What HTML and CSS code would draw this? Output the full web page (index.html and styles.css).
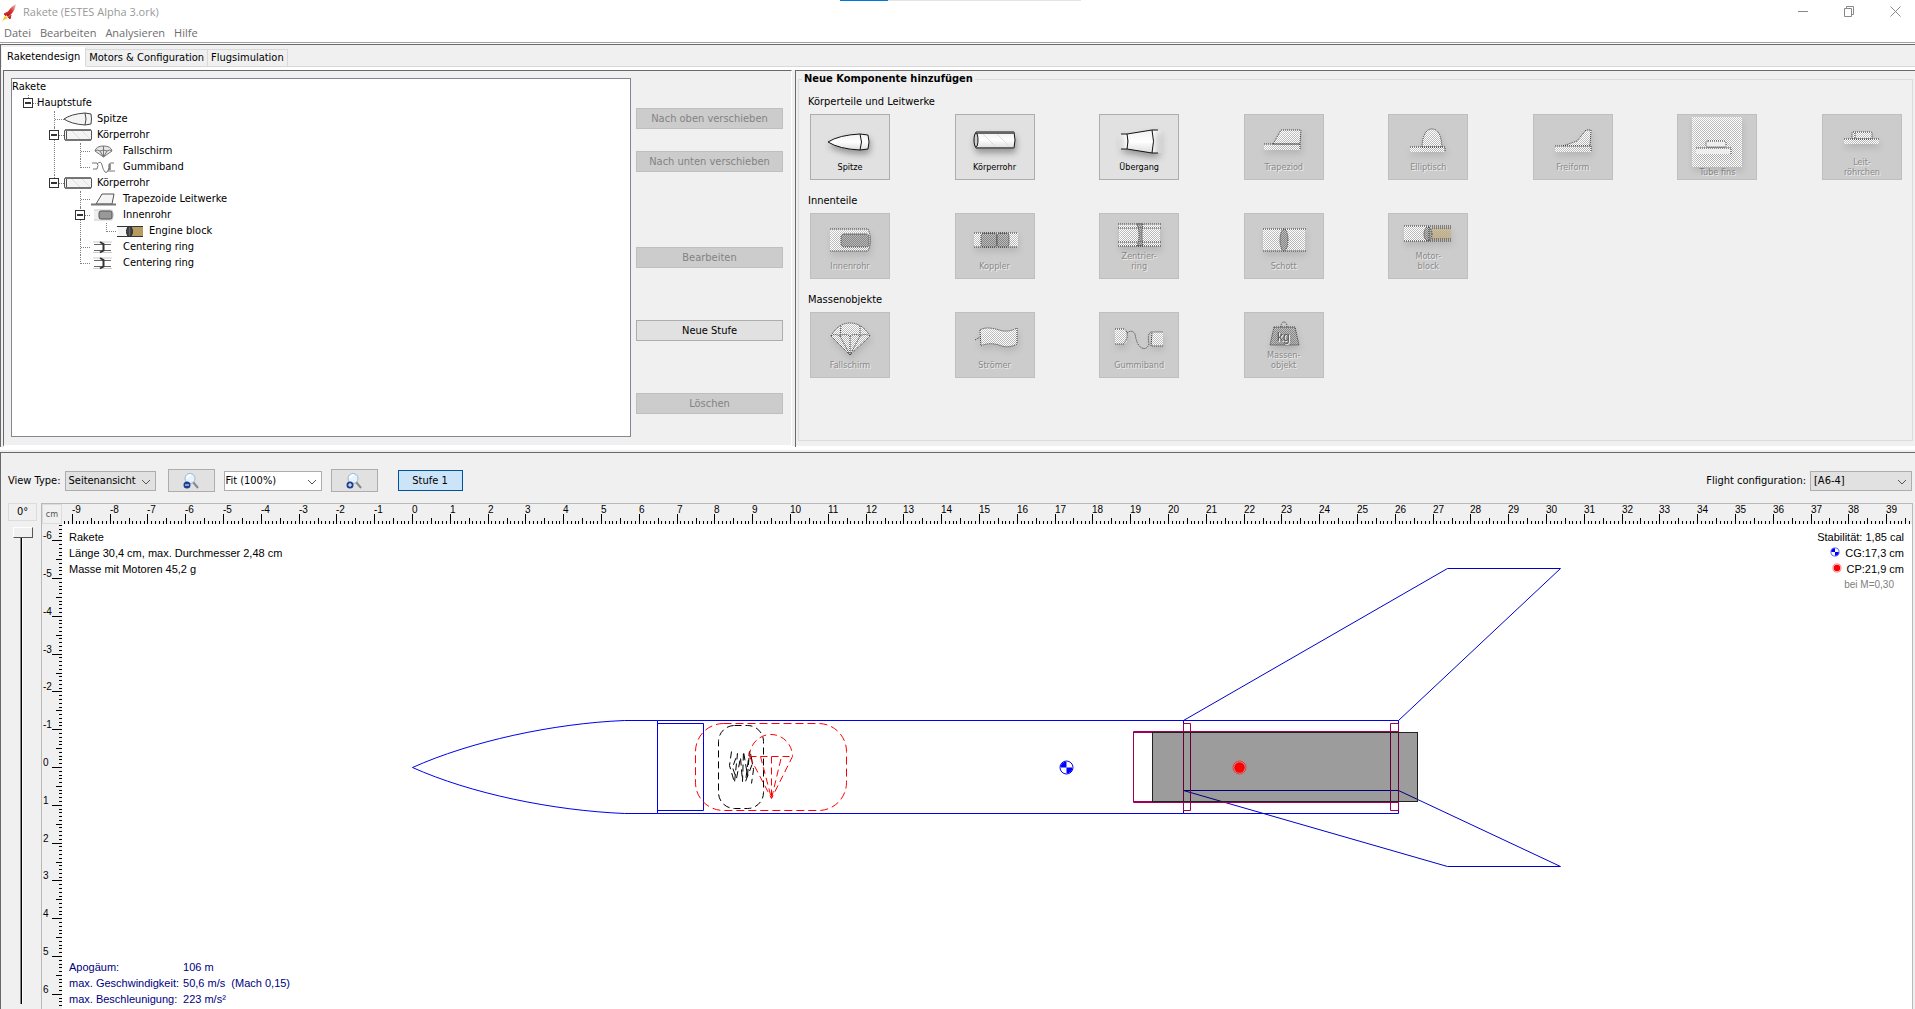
FILE: index.html
```html
<!DOCTYPE html>
<html lang="de">
<head>
<meta charset="utf-8">
<title>Rakete (ESTES Alpha 3.ork)</title>
<link rel="stylesheet" href="styles.css">
</head>
<body>
<svg class="defs" aria-hidden="true">
  <defs>
    <pattern id="dither" width="2" height="2" patternUnits="userSpaceOnUse"><rect width="1" height="1" fill="#fff"/><rect x="1" y="1" width="1" height="1" fill="#fff"/></pattern>
    <pattern id="dither-dark" width="2" height="2" patternUnits="userSpaceOnUse"><rect width="1" height="1" fill="#888"/><rect x="1" y="1" width="1" height="1" fill="#888"/></pattern>
    <pattern id="dither-tan" width="2" height="2" patternUnits="userSpaceOnUse"><rect width="1" height="1" fill="#c9ad70"/><rect x="1" y="1" width="1" height="1" fill="#c9ad70"/></pattern>
    <linearGradient id="metal" x2="0" y2="1"><stop offset="0" stop-color="#f0f0f0"/><stop offset=".5" stop-color="#fff"/><stop offset="1" stop-color="#ddd"/></linearGradient>
    <linearGradient id="fade-in"><stop offset="0" stop-color="#fff" stop-opacity="0"/><stop offset="1" stop-color="#fff"/></linearGradient>
    <linearGradient id="fade-out"><stop offset="0" stop-color="#fff"/><stop offset="1" stop-color="#fff" stop-opacity="0"/></linearGradient>
    <linearGradient id="flame" x1="1" x2="0" y2="1"><stop offset="0" stop-color="#e9dede"/><stop offset=".5" stop-color="#d9302c"/><stop offset="1" stop-color="#a81616"/></linearGradient>
    <symbol id="i-nose" viewBox="0 0 29 14"><path d="M1 7Q8 2 22 1L28 2Q29 7 28 12L22 13Q8 12 1 7Z" fill="#f4f4f4" stroke="#444"/><path d="M22 1Q24 7 22 13" fill="none" stroke="#444"/></symbol>
    <symbol id="i-tube" viewBox="0 0 29 14"><rect x="1.500" y="2" width="27" height="10" rx="1" fill="#f4f4f4" stroke="#555"/><path d="M9 3L17 11M19 3L27 11" fill="none" stroke="#ddd"/><path d="M2 2H28M2 12H28" stroke="#444"/><path d="M3.500 3V11" stroke="#555"/></symbol>
    <symbol id="i-chute" viewBox="0 0 29 14"><path d="M6 7Q7 2 14.500 2T23 7L14.500 13Z" fill="#e6e6e6" stroke="#777"/><path d="M6 7Q8 5 11 7Q14.500 5 18 7Q21 5 23 7M11 7L14.500 13L18 7M14.500 2V13" fill="none" stroke="#777"/></symbol>
    <symbol id="i-cord" viewBox="0 0 29 14"><path d="M3 3H8Q10 5 8 9H4M8 4Q12 0 13 5T16 12T20 8Q19 3 22 3H25M20 8L19 11H26" fill="none" stroke="#777"/><path d="M21 4V10" stroke="#333"/></symbol>
    <symbol id="i-fins" viewBox="0 0 29 14"><path d="M7 12L13 2H25L23 12Z" fill="#f4f4f4" stroke="#555"/><path d="M2 12.500H27" stroke="#777" stroke-width="2"/></symbol>
    <symbol id="i-inner" viewBox="0 0 29 14"><path d="M5 2H23Q26 7 23 12H5" fill="#eee" stroke="#ccc"/><rect x="10" y="3" width="13" height="8" rx="2" fill="#999" stroke="#555"/></symbol>
    <symbol id="i-block" viewBox="0 0 29 14"><path d="M2 2.500H28M2 12.500H28" stroke="#333"/><rect x="3" y="3" width="10" height="9" fill="#f4f4f4"/><rect x="17" y="3" width="11" height="9" fill="#b79a60"/><ellipse cx="14.500" cy="7.500" rx="3" ry="5" fill="#666" stroke="#222"/><path d="M13 3V12M16 3V12" stroke="#222"/></symbol>
    <symbol id="i-ring" viewBox="0 0 29 14"><path d="M4 2H23M4 12.500H23" stroke="#ccc"/><path d="M5 4.500H22M5 10.500H22" stroke="#666"/><path d="M11 2L14.500 4V10.500L11 12.500" fill="none" stroke="#333" stroke-width="2"/></symbol>
    <symbol id="i-lens" viewBox="0 0 16 16"><path d="M10 9L15 15" stroke="#888" stroke-width="2"/><circle cx="7" cy="5.500" r="5" fill="#e5f3ff" stroke="#9fb6cf"/><path d="M4 5Q5 2 8 2" fill="none" stroke="#fff" stroke-width="2"/></symbol>
    <symbol id="i-down" viewBox="0 0 10 6"><path d="M1 1L5 5L9 1" fill="none" stroke="#555"/></symbol>
    <symbol id="cg" viewBox="-8 -8 16 16"><circle r="6.500" fill="#fff" stroke="#00f" stroke-width="1"/><path d="M0 0H-6A6 6 0 0 1 0-6ZM0 0H6A6 6 0 0 1 0 6Z" fill="#00f"/></symbol>
    <symbol id="cp" viewBox="-8 -8 16 16"><circle r="6.500" fill="none" stroke="#f33"/><circle r="5.200" fill="#f00"/></symbol>
  </defs>
</svg>

<header class="titlebar">
  <svg class="app-icon" width="16" height="18" viewBox="0 0 16 18"><path d="M14 1Q8 4 4 12L6 14Q13 9 14 1Z" fill="url(#flame)"/><path d="M6 9L2 11L4 13M9 12L8 16L6 14" fill="#c22" stroke="#c22"/><path d="M3 13L0 18L6 15Z" fill="#f8c81c"/></svg>
  <h1>Rakete (ESTES Alpha 3.ork)</h1>
  <div class="progress"></div>
  <div class="window-buttons">
    <button aria-label="Minimieren"><svg width="11" height="11"><path d="M0 5.500H10" stroke="#888"/></svg></button>
    <button aria-label="Wiederherstellen"><svg width="11" height="11"><path d="M.5 2.500H7.500V10.500H.5ZM2.500 2.500V.5H9.500V8.500H7.500" fill="none" stroke="#888"/></svg></button>
    <button aria-label="Schließen"><svg width="11" height="11"><path d="M.5 .5L10.500 10.500M10.500 .5L.5 10.500" stroke="#888"/></svg></button>
  </div>
</header>
<nav class="menubar"><a href="#datei">Datei</a><a href="#bearbeiten">Bearbeiten</a><a href="#analysieren">Analysieren</a><a href="#hilfe">Hilfe</a></nav>

<main class="frame">
  <div class="tabs" role="tablist">
    <button role="tab" aria-selected="true" class="tab active">Raketendesign</button>
    <button role="tab" aria-selected="false" class="tab">Motors &amp; Configuration</button>
    <button role="tab" aria-selected="false" class="tab">Flugsimulation</button>
  </div>

  <div class="design">
    <section class="structure">
      <div class="tree">
        <div class="root">Rakete</div>
        <ul>
          <li><div class="node"><button class="toggle" aria-label="Hauptstufe einklappen"></button>Hauptstufe</div>
            <ul>
              <li><div class="node leaf"><svg class="part"><use href="#i-nose"/></svg>Spitze</div></li>
              <li><div class="node"><button class="toggle" aria-label="Körperrohr einklappen"></button><svg class="part"><use href="#i-tube"/></svg>Körperrohr</div>
                <ul>
                  <li><div class="node leaf"><svg class="part"><use href="#i-chute"/></svg>Fallschirm</div></li>
                  <li><div class="node leaf"><svg class="part"><use href="#i-cord"/></svg>Gummiband</div></li>
                </ul></li>
              <li><div class="node"><button class="toggle" aria-label="Körperrohr einklappen"></button><svg class="part"><use href="#i-tube"/></svg>Körperrohr</div>
                <ul>
                  <li><div class="node leaf"><svg class="part"><use href="#i-fins"/></svg>Trapezoide Leitwerke</div></li>
                  <li><div class="node"><button class="toggle" aria-label="Innenrohr einklappen"></button><svg class="part"><use href="#i-inner"/></svg>Innenrohr</div>
                    <ul><li><div class="node leaf"><svg class="part"><use href="#i-block"/></svg>Engine block</div></li></ul></li>
                  <li><div class="node leaf"><svg class="part"><use href="#i-ring"/></svg>Centering ring</div></li>
                  <li><div class="node leaf"><svg class="part"><use href="#i-ring"/></svg>Centering ring</div></li>
                </ul></li>
            </ul></li>
        </ul>
      </div>
      <div class="actions">
        <button class="btn" disabled>Nach oben verschieben</button>
        <button class="btn" disabled>Nach unten verschieben</button>
        <button class="btn edit" disabled>Bearbeiten</button>
        <button class="btn spaced">Neue Stufe</button>
        <button class="btn spaced" disabled>Löschen</button>
      </div>
    </section>

    <section class="components">
      <fieldset>
        <legend>Neue Komponente hinzufügen</legend>
        <h2>Körperteile und Leitwerke</h2>
        <div class="palette">
          <button class="comp"><svg><path d="M17 27Q28 20 49 19L57 20Q59 27 57 34L49 35Q28 34 17 27Z" fill="url(#metal)"/><path d="M49 19Q52 27 49 35" fill="none"/></svg>Spitze</button>
          <button class="comp"><svg><path d="M20 17H58Q60 25 58 33H20Q17 25 20 17Z" fill="url(#metal)"/><path d="M20 18H58M20 33H58" stroke="#666" stroke-width="2"/><ellipse cx="20" cy="25" rx="2" ry="7" fill="#ccc"/><path d="M27 19L40 32M41 19L54 32" stroke="#ddd"/></svg>Körperrohr</button>
          <button class="comp"><svg><path d="M18 19H27V34H18Z" fill="url(#fade-in)" stroke="none"/><path d="M52 15H63V38H52Z" fill="url(#fade-out)" stroke="none"/><path d="M27 19L52 15Q55 26 52 38L27 34Q29 26 27 19Z" fill="url(#metal)"/><path d="M21 19H27M21 34H27M52 15H58M52 38H58"/></svg>Übergang</button>
          <button class="comp" disabled><svg><path d="M28 29L36 15H56L55 29Z"/><path d="M19 29H55V35H19Z" stroke="none"/><path d="M19 29H55V35"/></svg>Trapeziod</button>
          <button class="comp" disabled><svg><path d="M33 32Q34 14 43 14T53 32Z"/><path d="M21 32H56V37H21Z" stroke="none"/><path d="M21 32H56V37" fill="none"/></svg>Elliptisch</button>
          <button class="comp" disabled><svg><path d="M29 31L43 26L52 15H57L56 31Z"/><path d="M21 31H57V37H21Z" stroke="none"/><path d="M21 31H57V37" fill="none"/></svg>Freiform</button>
          <button class="comp low" disabled><svg><path d="M14 2H64V52H14Z" stroke="none"/><rect x="28" y="26" width="20" height="6" rx="2" fill="#eee"/><path d="M18 33H53V39H18Z" fill="#eee" stroke="none"/><path d="M18 33H53V39" fill="none"/></svg>Tube fins</button>
          <button class="comp low" disabled><svg><rect x="29" y="17" width="20" height="7" rx="1"/><path d="M32 18V24"/><path d="M21 24H56V29H21Z" stroke="none"/><path d="M21 24H56" fill="none"/></svg>Leit-<br>röhrchen</button>
        </div>
        <h2>Innenteile</h2>
        <div class="palette">
          <button class="comp" disabled><svg><path d="M19 15H57Q62 26 57 37H19"/><rect class="dk" x="30" y="20" width="28" height="13" rx="3"/></svg>Innenrohr</button>
          <button class="comp" disabled><svg><path d="M18 19H62V33H18Z" stroke="none"/><path d="M18 19H62M18 33H62"/><rect class="dk" x="25" y="19" width="16" height="14" rx="3"/><rect class="dk" x="41" y="19" width="12" height="14" rx="3"/></svg>Koppler</button>
          <button class="comp" disabled><svg><path d="M19 10H60V32H19Z" stroke="none"/><path d="M18 10H61M18 14H61M18 28H61M18 32H61"/><path class="dk" d="M37 10H43Q41 21 43 32H37Q41 21 37 10Z"/></svg>Zentrier-<br>ring</button>
          <button class="comp" disabled><svg><path d="M18 15H60V37H18Z" stroke="none"/><path d="M18 15H61M18 37H61"/><ellipse class="dk" cx="39" cy="26" rx="4" ry="11"/></svg>Schott</button>
          <button class="comp" disabled><svg><path d="M15 12H39V27H15Z" stroke="none"/><path class="tan" d="M43 14H62V25H43Z" stroke="none"/><path d="M15 12H63M15 27H63M43 14H63M43 25H63"/><ellipse class="dk" cx="39" cy="20" rx="4" ry="7"/><path d="M40 13V27"/></svg>Motor-<br>block</button>
        </div>
        <h2>Massenobjekte</h2>
        <div class="palette">
          <button class="comp" disabled><svg><path d="M20 23Q27 10 39 10T59 23L39 42Z"/><path d="M20 23Q24 20 29 23Q33 20 39 23Q45 20 49 23Q54 20 59 23M29 23L39 42L49 23M39 23V42M30 13L29 23M49 13V23" fill="none"/></svg>Fallschirm</button>
          <button class="comp" disabled><svg><path d="M24 17Q30 13 43 17Q52 20 61 15V31Q52 36 43 32Q32 29 25 33ZM19 27L24 24"/></svg>Strömer</button>
          <button class="comp" disabled><svg><path d="M15 16H25Q29 23 26 31H15Z" stroke="none"/><path d="M52 19H63V33H52Z" stroke="none"/><path d="M15 16H24Q28 18 27 25L24 31H15M27 20Q32 16 35 21Q37 33 42 35T49 31Q47 21 51 19H63M52 20L51 33H63" fill="none"/></svg>Gummiband</button>
          <button class="comp" disabled><svg><path class="dk" d="M29 14H50L54 32H25Z"/><path d="M36 14Q36 9 39 9T42 14" fill="none"/><text x="32" y="28" class="kg">kg</text></svg>Massen-<br>objekt</button>
        </div>
      </fieldset>
    </section>
  </div>
</main>

<section class="view">
  <div class="toolbar">
    <label for="view-type">View Type:</label>
    <span class="combo"><select id="view-type" class="w-type"><option>Seitenansicht</option></select><svg class="arrow"><use href="#i-down"/></svg></span>
    <button class="btn zoom out" aria-label="Verkleinern"><svg width="16" height="16"><use href="#i-lens"/><circle cx="4" cy="12" r="3.500" fill="#1b3f94"/><path d="M2 12H6" stroke="#fff"/></svg></button>
    <span class="combo"><select class="w-zoom white" aria-label="Zoom"><option>Fit (100%)</option></select><svg class="arrow"><use href="#i-down"/></svg></span>
    <button class="btn zoom" aria-label="Vergrößern"><svg width="16" height="16"><use href="#i-lens"/><circle cx="4" cy="12" r="3.500" fill="#1b3f94"/><path d="M2 12H6M4 10V14" stroke="#fff"/></svg></button>
    <button class="btn stage" aria-pressed="true">Stufe 1</button>
    <label for="flight" class="push">Flight configuration:</label>
    <span class="combo"><select id="flight" class="w-flight"><option>[A6-4]</option></select><svg class="arrow"><use href="#i-down"/></svg></span>
  </div>

  <div class="stage-area">
    <div class="rotation">
      <output class="angle" for="rot">0°</output>
      <input id="rot" type="range" min="0" max="360" value="0" aria-label="Drehung">
    </div>
    <div class="sheet">
      <button class="unit">cm</button>
      <svg class="ruler-x" id="ruler-x"></svg>
      <svg class="ruler-y" id="ruler-y"></svg>
      <div class="canvas">
        <svg class="rocket">
          <g transform="translate(350.500 243.500)" fill="none" stroke-width="1">
            <g stroke="#00e">
              <path d="M0 0C58 -26 140 -44 212 -47H245V46H212C140 43 58 26 0 0Z"/>
              <path d="M245 -44H291V43H245M245 -47H771V46H245M771 -47H986V46H771Z"/>
            </g>
            <g stroke="#00c"><path d="M771 -47L1035 -199H1148L986 -47"/><path d="M771 23L1035 99H1148L986 23Z"/></g>
            <g stroke="#a00058"><path d="M721 -36H986V35H721ZM721 -35H986M721 34H986"/><path d="M771 -44H778V43H771ZM978 -44H986V43H978Z"/></g>
            <rect x="283" y="-44" width="151" height="87" rx="28" stroke="#f00" stroke-dasharray="8 4"/>
            <rect x="306" y="-42" width="45" height="83" rx="16" stroke="#000" stroke-dasharray="7 4"/>
            <path d="M319 -16L317 -2L322 15L325 -14L320 0L324 11L328 -10L330 14L331 -16L335 8L337 -16L333 14L340 -4L338 -14L341 2L339 16" stroke="#000" stroke-dasharray="7 4"/>
            <path d="M337 -11A21.500 22 0 0 1 380 -11M337 -11H380M337 -11L359 31L380 -11M348 -11L359 31L369 -11M359 -11V31" stroke="#f00" stroke-dasharray="7 4"/>
            <rect x="740" y="-35" width="265" height="69" fill="#000" fill-opacity=".39" stroke="#222"/>
            <use href="#cg" x="646" y="-8" width="16" height="16"/>
            <use href="#cp" x="819" y="-8" width="16" height="16"/>
          </g>
        </svg>
        <div class="info"><p>Rakete</p><p>Länge 30,4 cm, max. Durchmesser 2,48 cm</p><p>Masse mit Motoren 45,2 g</p></div>
        <div class="stability">
          <p>Stabilität: 1,85 cal</p>
          <p><svg width="10" height="10"><use href="#cg"/></svg>CG:17,3 cm</p>
          <p><svg width="10" height="10"><use href="#cp"/></svg>CP:21,9 cm</p>
          <p class="mach">bei M=0,30</p>
        </div>
        <dl class="flight-data">
          <dt>Apogäum:</dt><dd>106 m</dd>
          <dt>max. Geschwindigkeit:</dt><dd>50,6 m/s&nbsp; (Mach 0,15)</dd>
          <dt>max. Beschleunigung:</dt><dd>223 m/s²</dd>
        </dl>
      </div>
    </div>
  </div>
</section>
<script src="rulers.js"></script>
</body>
</html>
```
FILE: rulers.js
```js
// Draws the centimetre rulers along the top and left edges of the canvas.
const PX_PER_CM = 37.8;
const ORIGIN = { x: 350, y: 243 };

function drawRuler(svg, vertical) {
  const length = vertical ? svg.clientHeight : svg.clientWidth;
  const zero = vertical ? ORIGIN.y : ORIGIN.x;
  const first = Math.ceil(-zero / PX_PER_CM * 10);
  const last = Math.floor((length - zero) / PX_PER_CM * 10);
  let path = '';
  let labels = '';
  for (let i = first; i <= last; i++) {
    const pos = Math.round(zero + i * PX_PER_CM / 10) + 0.5;
    const size = i % 10 === 0 ? 10 : i % 5 === 0 ? 6 : 3;
    path += vertical ? `M${20 - size} ${pos}H20` : `M${pos} ${20 - size}V20`;
    if (i % 10 === 0) {
      labels += vertical
        ? `<text x="1" y="${pos - 1.5}">${i / 10}</text>`
        : `<text x="${pos - 0.5}" y="9">${i / 10}</text>`;
    }
  }
  svg.innerHTML = `<path d="${path}" stroke="#000"/>${labels}`;
}

function drawRulers() {
  drawRuler(document.getElementById('ruler-x'), false);
  drawRuler(document.getElementById('ruler-y'), true);
}
drawRulers();
window.addEventListener('resize', drawRulers);
```
FILE: styles.css
```css
* { box-sizing: border-box; }
html, body { height: 100%; }
body {
  margin: 0;
  display: flex;
  flex-direction: column;
  overflow: hidden;
  background: #fff;
  color: #000;
  font: 11px/16px "DejaVu Sans Condensed", "DejaVu Sans", sans-serif;
}
button, select { font: inherit; color: inherit; border-radius: 0; margin: 0; }
h1, h2, p, ul, dl, dd { margin: 0; padding: 0; font-size: inherit; font-weight: normal; }
ul { list-style: none; }
.defs { position: absolute; width: 0; height: 0; }

/* Title and menu */
.titlebar { position: relative; display: flex; align-items: center; height: 23px; padding-left: 2px; font: 11px/16px "Open Sans", sans-serif; color: #999; }
.titlebar h1 { margin-left: 5px; }
.progress { position: absolute; top: 0; left: calc(50% - 118px); width: 241px; height: 1px; background: linear-gradient(90deg, #0078d7 48px, #e5e5e5 48px); }
.window-buttons { margin-left: auto; display: flex; margin-right: -3px; }
.window-buttons button { width: 46px; height: 22px; padding: 0; border: 0; background: none; display: grid; place-items: center; }
.menubar { display: flex; gap: 9px; height: 20px; padding-left: 4px; border-bottom: 1px solid #a0a0a0; font: 11px/20px "Open Sans", sans-serif; }
.menubar a { color: #6d6d6d; text-decoration: none; }

/* Tabs */
.frame { margin-top: 1px; border-top: 1px solid #696969; border-left: 1px solid #696969; background: #f0f0f0; }
.tabs { display: flex; align-items: flex-end; height: 25px; padding: 1px 0 0 1px; border-bottom: 3px solid #fff; box-shadow: inset 0 -1px #d9d9d9; }
.tab { height: 18px; padding: 0 3px; border: 1px solid #d9d9d9; border-left: 0; background: #f0f0f0; line-height: 16px; }
.tab.active { height: 20px; padding: 0 5px; background: #fff; border-color: #fff #d9d9d9 #fff #fff; }

/* Design panel */
.design { display: grid; grid-template-columns: 789fr 1120fr; gap: 3px; height: 377px; margin-left: 2px; border-bottom: 1px solid #fff; }
.structure { display: flex; gap: 5px; padding: 7px 8px 8px 7px; border-top: 1px solid #696969; border-left: 1px solid #696969; border-right: 1px solid #fff; border-bottom: 2px solid #fff; }
.tree { flex: 1; height: 359px; border: 1px solid #828790; background: #fff; overflow: hidden; }
.tree .root { height: 16px; }
.tree li { position: relative; padding-left: 11px; }
.tree li li { padding-left: 26px; }
.tree li::before { content: ""; position: absolute; left: 16px; top: 0; bottom: 0; border-left: 1px dotted #808080; }
.tree li li::before { left: 31px; }
.tree li:last-child::before { bottom: auto; height: 9px; }
.node { position: relative; display: flex; align-items: center; height: 16px; white-space: nowrap; }
.node::before { content: ""; position: absolute; left: 6px; top: 8px; width: 9px; border-top: 1px dotted #808080; }
.toggle { position: relative; width: 10px; height: 10px; margin-right: 4px; padding: 0; border: 1px solid #333; background: linear-gradient(#333, #333) 1px 3px / 6px 2px no-repeat #fff; }
.leaf { padding-left: 14px; }
.part { width: 29px; height: 14px; margin-right: 5px; }

.actions { display: flex; flex-direction: column; width: 147px; padding-top: 30px; gap: 22px; }
.btn { height: 21px; padding: 0; border: 1px solid #adadad; background: #e1e1e1; line-height: 16px; }
.btn:disabled { border-color: #bfbfbf; background: #ccc; color: #838383; }
.actions .edit { margin-top: 53px; }
.actions .spaced { margin-top: 30px; }

/* Component palette */
.components { border-top: 1px solid #696969; border-left: 1px solid #696969; padding: 0 2px 3px 2px; min-width: 0; }
fieldset { height: 370px; margin: 0; padding: 0 10px 0 9px; border: 1px solid #dcdcdc; min-width: 0; }
legend { margin-left: -6px; padding: 0 2px; font-weight: bold; line-height: 16px; }
fieldset h2 { line-height: 16px; margin: 7px 0 4px; }
fieldset .palette + h2 { margin-top: 13px; }
.palette { display: grid; grid-template-columns: repeat(7, 1fr) 80px; height: 66px; padding-left: 2px; }
.comp { display: flex; flex-direction: column; align-items: center; width: 80px; height: 66px; padding: 0 0 7px; border: 1px solid #adadad; background: #e1e1e1; font-size: 9px; line-height: 10px; }
.comp.low { padding-bottom: 2px; }
.comp svg { flex: 1; width: 78px; min-height: 0; overflow: visible; stroke: #111; filter: drop-shadow(1px 4px 3px #0005); }
.comp:disabled { border-color: #bfbfbf; background: #ccc; color: #8a8a8a; text-shadow: 1px 1px #eee; }
.comp:disabled svg { fill: url(#dither); stroke: #333; stroke-dasharray: 1 1; filter: drop-shadow(1px 4px 3px #0003); }
.comp .dk { fill: url(#dither-dark); }
.comp .tan { fill: url(#dither-tan); }
.comp .kg { font: 12px "Liberation Sans", sans-serif; fill: #555; stroke: none; }

/* Rocket view */
.view { flex: 1; display: flex; flex-direction: column; min-height: 0; margin-top: 5px; border-top: 1px solid #696969; border-left: 1px solid #696969; background: #f0f0f0; box-shadow: 0 -2px #f0f0f0, 0 -3px #fff; }
.toolbar { display: flex; align-items: center; height: 50px; padding: 5px 3px 0 7px; }
.toolbar label { margin-right: 4px; }
.toolbar .push { margin-left: auto; }
.combo { position: relative; display: flex; }
.combo select { appearance: none; height: 20px; padding: 0 3px; border: 1px solid #adadad; background: #e1e1e1; }
.combo .white { background: #fff; padding: 0 1px; }
.w-type { width: 91px; }
.w-zoom { width: 98px; }
.w-flight { width: 102px; }
.arrow { position: absolute; right: 5px; top: 8px; width: 10px; height: 6px; pointer-events: none; }
.zoom { width: 47px; height: 23px; margin: 0 9px; display: grid; place-items: center; }
.zoom.out { margin-left: 12px; }
.stage { width: 65px; margin-left: 11px; border-color: #00549e; background: #cce4f7; }

.stage-area { flex: 1; display: flex; min-height: 0; padding: 0 2px 0 7px; gap: 4px; }
.rotation { display: flex; flex-direction: column; align-items: center; width: 29px; padding-bottom: 5px; }
.angle { width: 29px; height: 18px; border: 1px solid #dcdcdc; text-align: center; line-height: 16px; }
#rot { flex: 1; width: 21px; min-height: 0; margin: 6px 0 0; writing-mode: vertical-lr; appearance: none; background: linear-gradient(90deg, transparent 8px, #888 8px 9px, #000 9px 10px, #fff 10px 11px, transparent 11px); }
#rot::-webkit-slider-thumb { appearance: none; width: 20px; height: 11px; border: 1px solid; border-color: #fff #555 #555 #fff; background: #f0f0f0; }
.sheet { flex: 1; display: grid; grid-template: 20px 1fr / 20px 1fr; min-width: 0; min-height: 0; border: 1px solid #b8b8b8; border-bottom: 0; }
.unit { padding: 0; border: 1px solid #dcdcdc; background: #f0f0f0; font-size: 9px; color: #555; }
.ruler-x, .ruler-y { width: 100%; height: 100%; min-height: 0; font: 10px "Liberation Sans", Arial, sans-serif; shape-rendering: crispEdges; }
.canvas { position: relative; display: grid; background: #fff; min-height: 0; overflow: hidden; font: 11px/16px "Liberation Sans", Arial, sans-serif; grid-template: 1fr auto / 1fr auto; }
.rocket { position: absolute; inset: 0; width: 100%; height: 100%; }
.info { position: relative; padding: 5px 7px; }
.stability { position: relative; padding: 5px 8px; text-align: right; }
.stability svg { margin-right: 5px; }
.stability .mach { font-size: 10px; color: #808080; padding: 0 10px; }
.flight-data { position: relative; display: grid; grid-template-columns: max-content auto; column-gap: 4px; justify-content: start; padding: 0 7px 2px; color: #000080; }
```
